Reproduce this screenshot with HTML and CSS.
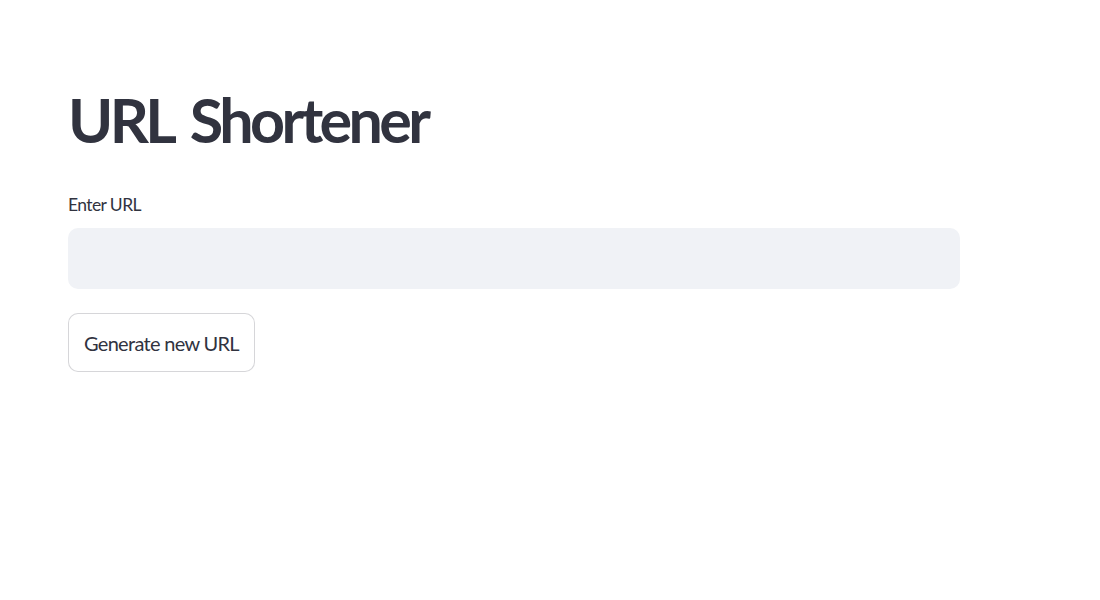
FILE: index.html
```html
<!DOCTYPE html>
<html>
<head>
<meta charset="utf-8">
<link rel="stylesheet" href="styles.css">
</head>
<body>
<main class="main">
  <h1 class="title">URL Shortener</h1>
  <div class="field">
    <label class="label" for="url">Enter URL</label>
    <input class="input" id="url" type="text">
  </div>
  <button class="btn">Generate new URL</button>
</main>
</body>
</html>
```
FILE: styles.css
```css
html, body {
  margin: 0;
  padding: 0;
  background: #ffffff;
}
body {
  font-family: "Lato", "Noto Sans", sans-serif;
  color: rgb(49, 51, 63);
}
.main {
  width: 892px;
  padding: 80px 0 0 68px;
  display: flex;
  flex-direction: column;
  align-items: flex-start;
}
.title {
  margin: 0;
  font-size: 61px;
  font-weight: 700;
  line-height: 80px;
  letter-spacing: -3.6px;
  word-spacing: 7px;
}
.field {
  margin-top: 32px;
  width: 892px;
  display: flex;
  flex-direction: column;
}
.label {
  font-size: 17.5px;
  line-height: 26px;
  margin-bottom: 10px;
  letter-spacing: -0.6px;
}
.input {
  box-sizing: border-box;
  width: 892px;
  height: 61px;
  border: none;
  border-radius: 10px;
  background: rgb(240, 242, 246);
  outline: none;
  padding: 0 16px;
  font: inherit;
}
.btn {
  margin-top: 24px;
  box-sizing: border-box;
  height: 59px;
  padding: 0 15px;
  background: #ffffff;
  border: 1px solid rgba(49, 51, 63, 0.2);
  border-radius: 10px;
  font-family: inherit;
  font-size: 20px;
  color: rgb(49, 51, 63);
  letter-spacing: -0.7px;
}
```
